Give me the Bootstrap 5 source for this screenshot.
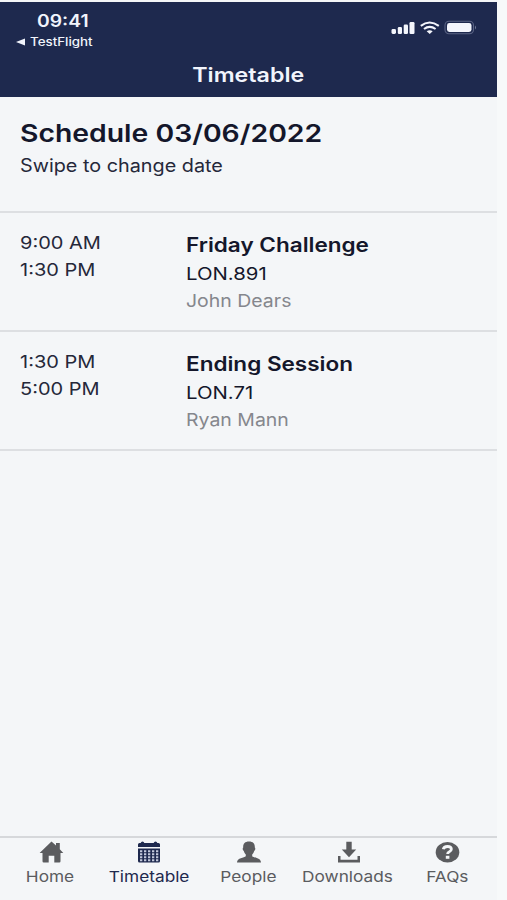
<!DOCTYPE html>
<html lang="en">
<head>
<meta charset="utf-8">
<meta name="viewport" content="width=device-width, initial-scale=1">
<title>Timetable</title>
<link href="https://cdn.jsdelivr.net/npm/bootstrap@5.3.0/dist/css/bootstrap.min.css" rel="stylesheet">
<style>
body{font-family:Inter,"Liberation Sans",sans-serif;background:#f7f9fa;color:#14172b;height:900px;overflow:hidden}
.screen{width:497px;height:900px;background:#f4f6f8;padding-top:2px}
.topbar{height:94.5px;background:#1e294e;color:#f1f4fc}
/* wide lettering: --k is the horizontal stretch */
.w{display:inline-block;white-space:nowrap;transform:scaleX(var(--k,1.15));transform-origin:0 50%}
.text-center .w{transform-origin:50% 50%}
.clock{font-size:16.8px;line-height:20px;font-weight:600;padding:9px 0 0 37px;height:32px}
.back{font-size:11.3px;line-height:14px;font-weight:500;padding-left:15.5px;height:15px;--k:1.18}
.back svg{margin-right:4px}
.status{height:61px}
.status-icons{padding:18px 20px 0 0}
.bar-title{font-size:20px;line-height:24px;font-weight:600;--k:1.16}
.intro{height:116px;padding:21px 20px 0;border-bottom:2px solid #dddfe2;--k:1.157}
.intro h1{font-size:24.5px;line-height:30px;font-weight:600;margin:0 0 6px}
.intro p{font-size:18px;line-height:24px;margin:0;color:#25283a;--k:1.1}
.event{height:119.2px;padding:16px 20px 0;border-bottom:2px solid #dddfe2;font-size:17.8px;line-height:27px;--k:1.145}
.times{width:165.5px;padding-top:.5px;color:#25283a;--k:1.125}
.event h2{font-size:19.5px;line-height:28px;font-weight:600;margin:2px 0 1px;--k:1.155}
.who{color:#85878d;--k:1.095}
.tabs{height:64px;border-top:2px solid #d6d8db;color:#5b5c5f;font-size:15px;line-height:20px}
.tab{padding-top:3px}
.tab svg{display:block;margin:0 auto 3px;transform:translateX(1px)}
.tab.active{color:#1e294e}
</style>
</head>
<body>
<div class="screen d-flex flex-column">
  <header class="topbar">
    <div class="status d-flex justify-content-between">
      <div>
        <div class="clock"><span class="w">09:41</span></div>
        <div class="back d-flex align-items-center"><svg width="10" height="8" viewBox="0 0 10 8"><path d="M0 4 9 .5v7z" fill="currentColor"/></svg><span class="w">TestFlight</span></div>
      </div>
      <div class="status-icons">
        <svg class="d-block" width="86" height="16" viewBox="0 0 86 16" fill="#f4f6fc"><rect x="0.5" y="9" width="4.5" height="5" rx="1.4"/><rect x="6.8" y="7" width="4.2" height="7" rx="1.2"/><rect x="12.7" y="4.5" width="4.3" height="9.5" rx="1.2"/><rect x="18.5" y="2" width="5" height="12" rx="1.2"/><g fill="none" stroke="#f4f6fc" stroke-width="2.1"><path d="M29.8 5.8Q38.5-.8 47.8 5.8M33 9q5.6-4.2 11.6 0"/></g><path d="M35.7 11.2q3-2 6 0l-3 2.8z"/><rect x="54" y="1.3" width="28.5" height="12.4" rx="4" fill="none" stroke="#5b6485" stroke-width="1.1"/><rect x="56" y="3" width="24.5" height="9" rx="2.4"/><path d="M84 5.5q2 2 0 4z" fill="#747c98"/></svg>
      </div>
    </div>
    <div class="bar-title text-center"><span class="w">Timetable</span></div>
  </header>
  <section class="intro">
    <h1><span class="w">Schedule 03/06/2022</span></h1>
    <p><span class="w">Swipe to change date</span></p>
  </section>
  <article class="event d-flex">
    <div class="times d-flex flex-column align-items-start"><span class="w">9:00 AM</span><span class="w">1:30 PM</span></div>
    <div class="d-flex flex-column align-items-start"><h2><span class="w">Friday Challenge</span></h2><span class="w">LON.891</span><span class="w who">John Dears</span></div>
  </article>
  <article class="event d-flex">
    <div class="times d-flex flex-column align-items-start"><span class="w">1:30 PM</span><span class="w">5:00 PM</span></div>
    <div class="d-flex flex-column align-items-start"><h2><span class="w">Ending Session</span></h2><span class="w">LON.71</span><span class="w who">Ryan Mann</span></div>
  </article>
  <nav class="tabs mt-auto row row-cols-5 g-0 text-center">
    <div class="tab">
      <svg width="26" height="23" viewBox="-1 0 26 23" fill="currentColor"><path d="M12.5.5 17 4.6V2h3.800v6.200L24.300 12H21.500v8.300q0 1.200-1.200 1.200h-5v-6.800h-5.600v6.800h-5q-1.200 0-1.200-1.200V12H.6z"/></svg>
      <span class="w">Home</span></div>
    <div class="tab active">
      <svg width="26" height="23" viewBox="1 0 26 23"><path fill="currentColor" d="M3.5 2h1.200Q5 .5 6.500.5T8.300 2h9.400Q18 .5 19.500.5T21.300 2h1.200q1.500 0 1.500 1.500V6H2V3.500Q2 2 3.500 2zM2 7.500h22V20q0 1.500-1.500 1.500h-19Q2 21.500 2 20z"/><path stroke="#c3c9dc" stroke-width="1.9" stroke-dasharray="2.300 1.700" d="M4 10.300h19M4 13.300h19M4 16.300h19M4 19.300h19"/></svg>
      <span class="w">Timetable</span></div>
    <div class="tab">
      <svg width="26" height="23" viewBox="0 0 26 23" fill="currentColor"><path d="M13 .5c4.300 0 6 2.400 5.800 6 .9.600.5 2.700-.6 3.400-.4 1.600-1.100 2.700-2 3.500v1.800c1.500 1.500 8.800 1.500 8.800 6.300H1c0-4.800 7.300-4.800 8.800-6.300v-1.800c-.9-.8-1.600-1.900-2-3.500-1.100-.7-1.500-2.800-.6-3.400C7 2.900 8.700.5 13 .5z"/></svg>
      <span class="w">People</span></div>
    <div class="tab">
      <svg width="26" height="23" viewBox="0 0 26 23" fill="currentColor"><path d="M10.300.8h5.400v7.700h4.500L13 16.200 5.800 8.500h4.500z"/><path d="M2 15h2.500v3.800h17V15H24v6.500H2z"/></svg>
      <span class="w">Downloads</span></div>
    <div class="tab">
      <svg width="26" height="23" viewBox="0 0 26 23"><ellipse cx="12.5" cy="11.300" rx="11.800" ry="10.200" fill="currentColor"/><path d="M8.300 8.300q.5-2.800 4.200-2.800t3.900 2.600q0 1.800-2 2.600-1.800.8-1.800 2.300" fill="none" stroke="#f4f6f8" stroke-width="2.800"/><rect x="10.800" y="14.800" width="3.600" height="3" fill="#f4f6f8"/></svg>
      <span class="w">FAQs</span></div>
  </nav>
</div>
<script src="https://cdn.jsdelivr.net/npm/bootstrap@5.3.0/dist/js/bootstrap.bundle.min.js"></script>
</body>
</html>
